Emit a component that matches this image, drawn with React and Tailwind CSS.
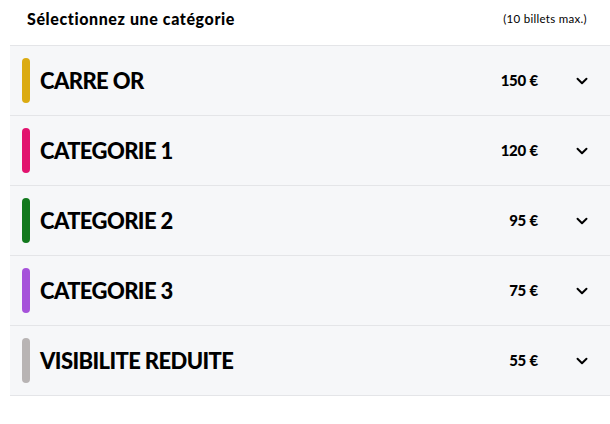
import { ChevronDown } from 'lucide-react';

const categories = [
  { name: 'CARRE OR', price: '150 €', color: 'bg-[#dbab12]' },
  { name: 'CATEGORIE 1', price: '120 €', color: 'bg-[#e2136e]' },
  { name: 'CATEGORIE 2', price: '95 €', color: 'bg-[#12791d]' },
  { name: 'CATEGORIE 3', price: '75 €', color: 'bg-[#a652da]' },
  { name: 'VISIBILITE REDUITE', price: '55 €', color: 'bg-[#b8b4b4]' }
];

export default function App() {
  return (
    <main className="min-h-screen bg-white pl-[10px] font-['Lato',sans-serif] text-black">
      <header className="flex h-[45px] items-center justify-between pb-[8px] pl-[17px] pr-[23px]">
        <h1 className="text-[16px] font-black tracking-[0.6px]">Sélectionnez une catégorie</h1>
        <span className="text-[11.5px] tracking-[0.3px]">(10 billets max.)</span>
      </header>

      <ul className="border-t border-[#e4e5e8]">
        {categories.map((category) => (
          <li
            key={category.name}
            className="flex h-[70px] items-center border-b border-[#e4e5e8] bg-[#f6f7f9] pl-[12px] pr-[19px]"
          >
            <span className={`h-[45px] w-[8px] rounded-full ${category.color}`} />
            <span className="ml-[10px] flex-1 text-[22px] font-black tracking-[-0.6px]">
              {category.name}
            </span>
            <span className="text-[15px] font-black tracking-[-0.2px]">{category.price}</span>
            <ChevronDown className="ml-[35px] h-[18px] w-[18px]" strokeWidth={2.6} />
          </li>
        ))}
      </ul>
    </main>
  );
}
